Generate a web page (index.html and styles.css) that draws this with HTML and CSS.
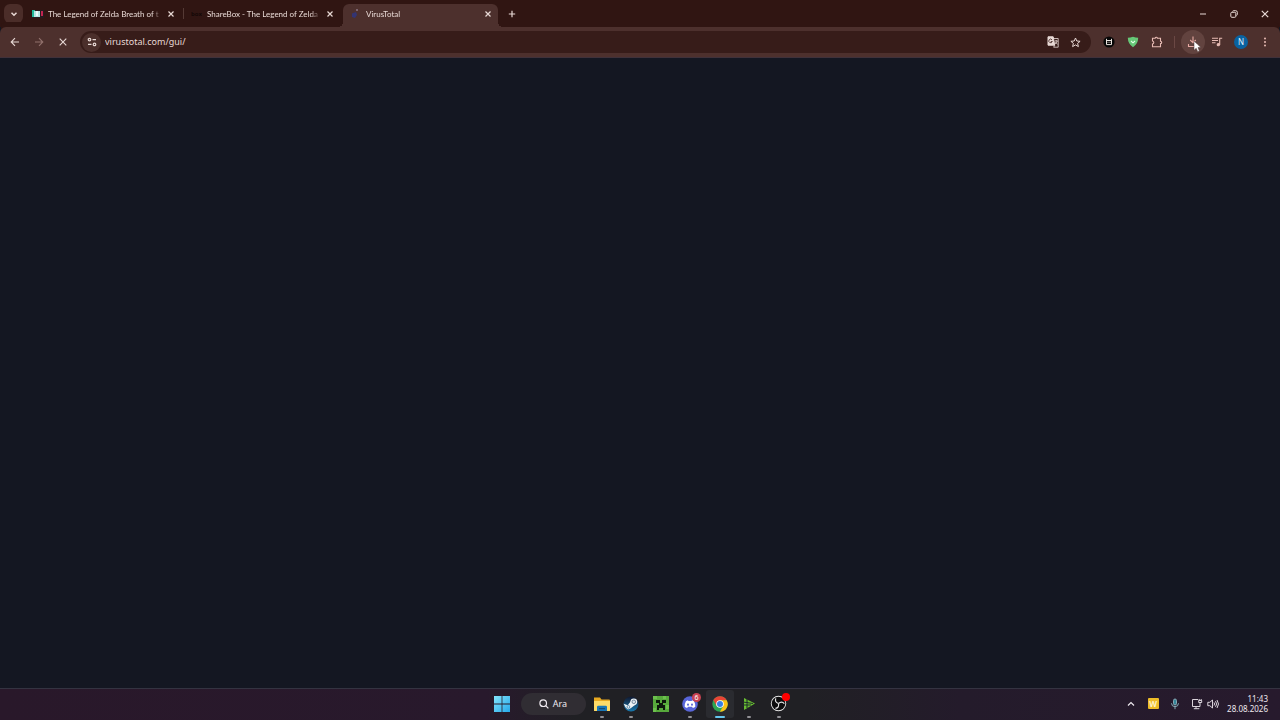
FILE: index.html
```html
<!DOCTYPE html>
<html lang="tr">
<head>
	<meta charset="UTF-8">
	<title>VirusTotal</title>
	<meta name="viewport" content="width=device-width,initial-scale=1">
	<link rel="stylesheet" href="styles.css">
</head>
<body>
	<!-- Tab strip -->
	<header class="tabstrip">
		<button class="tab-search" aria-label="Search tabs">
			<svg width="8" height="8" viewBox="0 0 8 8"><path d="M1.5 2.7 4 5.2 6.5 2.7" fill="none" stroke="currentColor" stroke-width="1.5"/></svg>
		</button>
		<div class="tab">
			<svg class="favicon" width="12" height="12" viewBox="0 0 12 12"><path d="M0 2h12v8H0z" fill="#251b20"/><path d="M0 2h3v7H0z" fill="#20b99a"/><path d="M2 3h6v6H2z" fill="#b5e6e4"/><path d="M4 3h2v5H4z" fill="#e9fbfa"/><path d="M9 3h2v5H9z" fill="#c22450"/></svg>
			<button class="tab-title">The Legend of Zelda Breath of t</button>
			<button class="tab-close" aria-label="Close tab"><svg width="8" height="8" viewBox="0 0 8 8"><path d="m1.5 1.5 5 5m0-5-5 5" stroke="currentColor" stroke-width="1.2"/></svg></button>
		</div>
		<div class="tab">
			<span class="favicon box-logo">box</span>
			<button class="tab-title">ShareBox - The Legend of Zelda</button>
			<button class="tab-close" aria-label="Close tab"><svg width="8" height="8" viewBox="0 0 8 8"><path d="m1.5 1.5 5 5m0-5-5 5" stroke="currentColor" stroke-width="1.2"/></svg></button>
		</div>
		<div class="tab active">
			<svg class="favicon" width="12" height="12" viewBox="0 0 12 12"><path d="M2 5.5 6 4l1 3-2 3-3-1z" fill="#333472"/><circle cx="7" cy="2" r=".8" fill="#b6a6c5"/></svg>
			<button class="tab-title">VirusTotal</button>
			<button class="tab-close" aria-label="Close tab"><svg width="8" height="8" viewBox="0 0 8 8"><path d="m1.5 1.5 5 5m0-5-5 5" stroke="currentColor" stroke-width="1.2"/></svg></button>
		</div>
		<button class="new-tab" aria-label="New tab"><svg width="8" height="8" viewBox="0 0 8 8"><path d="M4 .8v6.4M.8 4h6.4" stroke="currentColor" stroke-width="1.2"/></svg></button>
		<div class="window-buttons">
			<button aria-label="Minimize"><svg width="8" height="8" viewBox="0 0 8 8"><path d="M1 4h6" stroke="currentColor"/></svg></button>
			<button aria-label="Restore"><svg width="8" height="8" viewBox="0 0 8 8" fill="none" stroke="currentColor"><rect x=".8" y="2.3" width="5" height="5" rx="1"/><path d="M2.5 1.5q.2-.8 1.2-.8h2q1.6 0 1.6 1.6v2q0 1-.8 1.2"/></svg></button>
			<button aria-label="Close"><svg width="8" height="8" viewBox="0 0 8 8"><path d="m.8.8 6.4 6.4m0-6.4L.8 7.2" stroke="currentColor" stroke-width="1.2"/></svg></button>
		</div>
	</header>

	<!-- Toolbar -->
	<nav class="toolbar">
		<button class="tool" aria-label="Back"><svg width="10" height="10" viewBox="0 0 10 10" fill="none" stroke="currentColor" stroke-width="1.1"><path d="M9 5H1.5M5 1.2 1.2 5 5 8.8"/></svg></button>
		<button class="tool" aria-label="Forward" disabled><svg width="10" height="10" viewBox="0 0 10 10" fill="none" stroke="currentColor" stroke-width="1.1"><path d="M1 5h7.5M5 1.2 8.8 5 5 8.8"/></svg></button>
		<button class="tool" aria-label="Stop"><svg width="10" height="10" viewBox="0 0 10 10" fill="none" stroke="currentColor" stroke-width="1.1"><path d="m1.7 1.7 6.6 6.6m0-6.6L1.7 8.3"/></svg></button>
		<div class="omnibox">
			<button class="site-info" aria-label="Site information"><svg width="10" height="10" viewBox="0 0 10 10" fill="none" stroke="currentColor" stroke-width="1.2"><circle cx="2.5" cy="2.6" r="1.3"/><path d="M5.5 2.6H9M1 7.4h3.5"/><circle cx="7.5" cy="7.4" r="1.3"/></svg></button>
			<input class="address" type="text" aria-label="Address" value="virustotal.com/gui/">
			<button class="page-action" aria-label="Translate"><svg width="12" height="12" viewBox="0 0 12 12" fill="none" stroke="currentColor"><path d="M1 .8h5.2l1.5 8.4H1z" fill="currentColor"/><path d="M5 3.8A1.8 1.8 0 1 0 5.3 5.5H3.8" stroke="#371c19" stroke-width=".8"/><path d="M7 2.5h4.2v8.7H6.6l1.2-2M7.8 5h3M9.2 4v1M10.2 5q-.5 2-2.2 3M8.3 6l2.2 2.4" stroke-width=".8"/></svg></button>
			<button class="page-action" aria-label="Bookmark"><svg width="11" height="11" viewBox="0 0 11 11" fill="none" stroke="currentColor"><path d="m5.5 1 1.3 3 3.3.3-2.5 2.1.8 3.2-2.9-1.7-2.9 1.7.8-3.2L.9 4.3 4.2 4z"/></svg></button>
		</div>
		<div class="tools">
			<button class="tool" aria-label="Extension"><svg width="12" height="12" viewBox="0 0 12 12"><circle cx="6" cy="6" r="5.6" fill="#080707"/><path d="M3.5 2.8v5.8h5V2.8M3.5 4.5h5" fill="none" stroke="#e8e2dd"/><path d="M5 5.8v1m2-1v1" stroke="#e8e2dd" stroke-width=".9"/></svg></button>
			<button class="tool" aria-label="Ad blocker"><svg width="12" height="12" viewBox="0 0 12 12"><path d="M6 .8q2.6 1 5.2 1-.1 6.2-5.2 9.4Q.9 8 .8 1.8q2.6 0 5.2-1z" fill="#66c777"/><path d="m4 5 2 1.8L8 5" fill="none" stroke="#e2ffe5" stroke-width="1.1"/></svg></button>
			<button class="tool" aria-label="Extensions"><svg width="12" height="12" viewBox="0 0 12 12" fill="none" stroke="currentColor" stroke-width="1.1"><path d="M1.5 2.2h2.7q.2-1 1.1-1t1.1 1h3.1v3q1.2.2 1.2 1.2t-1.2 1.2v3.2h-8V8q1.3-.3 1.3-1.5T1.5 5z"/></svg></button>
		</div>
		<div class="tools downloads">
			<button class="tool download" aria-label="Downloads">
				<svg width="12" height="12" viewBox="0 0 12 12" fill="none" stroke="#e8aaa3" stroke-width="1.1"><path d="M6 .5v6M3.2 4 6 6.8 8.8 4M1.5 8v2.5h9V8"/></svg>
				<svg class="pointer" width="9" height="13" viewBox="0 0 9 13"><path d="M1 1v9.3l2.2-2 1.5 3.4 1.7-.8L5 7.6h3z" fill="#fff" stroke="#493330" stroke-width=".5"/></svg>
			</button>
			<button class="tool" aria-label="Media controls"><svg width="12" height="12" viewBox="0 0 12 12" fill="none" stroke="#e8bbb4" stroke-width="1.1"><path d="M1 2.2h6M1 4.5h6M1 6.8h3.5M8.7 9V2.2h2.5"/><circle cx="7.3" cy="8.7" r="1.1" fill="#e8bbb4"/></svg></button>
			<button class="tool" aria-label="Profile"><span class="avatar">N</span></button>
			<button class="tool" aria-label="Menu"><svg width="10" height="10" viewBox="0 0 10 10" fill="#e8bbb4"><circle cx="5" cy="1.5" r="1"/><circle cx="5" cy="5" r="1"/><circle cx="5" cy="8.5" r="1"/></svg></button>
		</div>
	</nav>

	<!-- Page still loading -->
	<main class="page"></main>

	<!-- Taskbar -->
	<footer class="taskbar">
		<div class="launcher">
			<button class="app" aria-label="Start"><svg width="16" height="16" viewBox="0 0 16 16"><defs><linearGradient id="win" x2="1" y2="1"><stop stop-color="#84e4fc"/><stop offset="1" stop-color="#25a8ea"/></linearGradient></defs><path d="M0 0h7.6v7.6H0zM8.4 0H16v7.6H8.4zM0 8.4h7.6V16H0zM8.4 8.4H16V16H8.4z" fill="url(#win)"/></svg></button>
			<button class="search"><svg width="10" height="10" viewBox="0 0 10 10" fill="none" stroke="currentColor" stroke-width="1.2"><circle cx="4.2" cy="4.2" r="3.3"/><path d="m6.6 6.6 2.8 2.8"/></svg>Ara</button>
			<div class="apps">
				<button class="app open" aria-label="File Explorer"><svg width="18" height="18" viewBox="0 0 18 18"><path d="M1 2.5h6l1.5 2H16q1 0 1 1V16H1z" fill="#e8a920"/><path d="M1 6h16v9.3q0 .7-.7.7H1.7q-.7 0-.7-.7z" fill="#fddb68"/><path d="M4 16v-4q0-1.3 1.3-1.3h7.4q1.3 0 1.3 1.3v4z" fill="#1976b6"/><path d="M6 13h6v1.2H6z" fill="#124b78"/></svg></button>
				<button class="app open" aria-label="Steam"><svg width="16" height="16" viewBox="0 0 16 16"><defs><linearGradient id="steam" x2="0" y2="1"><stop stop-color="#10182f"/><stop offset="1" stop-color="#1978ad"/></linearGradient></defs><circle cx="8" cy="8" r="7.5" fill="url(#steam)"/><path d="m.6 7.8 4.2 1.5 3-4 4.5 3.5-4.6 3.4-2.7 1.2-2.4-2z" fill="#eef3f6"/><circle cx="10.8" cy="5.8" r="3.4" fill="#eef3f6"/><circle cx="10.8" cy="5.8" r="1.8" fill="#dce5ec" stroke="#49647e" stroke-width=".7"/><circle cx="5.4" cy="10.9" r="1.4" fill="none" stroke="#3b6e93" stroke-width=".7"/></svg></button>
				<button class="app" aria-label="Minecraft"><svg width="16" height="16" viewBox="0 0 16 16"><path d="M0 0h16v16H0z" fill="#57a93c"/><path d="M0 0h4v3H0zM10 0h3v3h-3zM13 9h3v4h-3zM0 12h3v4H0z" fill="#6cc04d"/><path d="M3 4h4v3H3zm6 0h4v3H9zM6 7h4v2h2v5h-2v-2H6v2H4V9h2z" fill="#0c180c"/></svg></button>
				<button class="app open" aria-label="Discord"><svg width="16" height="16" viewBox="0 0 16 16"><circle cx="8" cy="8" r="7.8" fill="#5865d8"/><path d="m5.9 4.3.5.8h3.2l.5-.8 2 .9q1.5 2.8 1.2 5.5-1 .9-2.5 1.2l-.7-1.2H5.9l-.7 1.2q-1.5-.3-2.5-1.2-.3-2.7 1.2-5.5z" fill="#fff"/><ellipse cx="6" cy="8.6" rx="1" ry="1.2" fill="#5865d8"/><ellipse cx="10" cy="8.6" rx="1" ry="1.2" fill="#5865d8"/></svg><span class="badge">6</span></button>
				<button class="app open current" aria-label="Chrome"><svg width="16" height="16" viewBox="0 0 16 16"><circle cx="8" cy="8" r="7.7" fill="#2da653"/><path d="M1.3 4.1A7.7 7.7 0 0 1 14.7 4.2H8L4.7 10z" fill="#e94435"/><path d="M8 4.2h6.7A7.7 7.7 0 0 1 7.9 15.7L11.3 10z" fill="#fbc116"/><circle cx="8" cy="8" r="3.8" fill="#fff"/><circle cx="8" cy="8" r="3" fill="#367fe5"/></svg></button>
				<button class="app open" aria-label="Media player"><svg width="14" height="16" viewBox="0 0 14 16"><path d="m2 2 11 5.5L2 14z" fill="#69bd32"/><path d="m1 6 10 1.5M1 9h8M5 3v9" stroke="#20302a" stroke-width="1.1"/></svg></button>
				<button class="app open" aria-label="OBS Studio"><svg width="17" height="17" viewBox="0 0 17 17"><circle cx="8.5" cy="8.5" r="7.7" fill="#e4e4e4"/><circle cx="8.5" cy="8.5" r="6.8" fill="#0c0c0d"/><g fill="none" stroke="#e4e4e4" stroke-width="1.2"><path id="blade" d="M8.5 8.5Q4.4 7.2 5.8 3.4"/><use href="#blade" transform="rotate(120 8.5 8.5)"/><use href="#blade" transform="rotate(240 8.5 8.5)"/></g></svg><span class="badge recording"></span></button>
			</div>
		</div>
		<div class="tray">
			<button aria-label="Show hidden icons"><svg width="8" height="8" viewBox="0 0 8 8"><path d="M1 5.5 4 2.5l3 3" fill="none" stroke="currentColor" stroke-width="1.2"/></svg></button>
			<button aria-label="W"><span class="w-icon">W</span></button>
			<button aria-label="Microphone"><svg width="10" height="12" viewBox="0 0 10 12" fill="none" stroke="#86a9b5"><rect x="3.5" y="1" width="3" height="6" rx="1.5" fill="#36869a"/><path d="M1.5 5.3Q1.7 8.7 5 8.7t3.5-3.4M5 8.7v2.5"/></svg></button>
			<div class="status">
				<button aria-label="Network"><svg width="12" height="12" viewBox="0 0 12 12" fill="none" stroke="currentColor" stroke-width=".9"><path d="M7 1.5H1.5v7H9V6M5 8.5v2M2.8 10.7h5.5M9 6V4.7M7.7 2.5h3v2h-3zM8.2 1v1.5M10.2 1v1.5"/></svg></button>
				<button aria-label="Volume"><svg width="12" height="12" viewBox="0 0 12 12" fill="none" stroke="currentColor" stroke-width=".9"><path d="M.8 4.3h2L5.5 2v8L2.8 7.7h-2zM7 4.5q1.2 1.5 0 3M8.5 3.2q2.2 2.8 0 5.6M10 2q3 4 0 8"/></svg></button>
			</div>
			<button class="clock"><time>11:43</time><time>28.08.2026</time></button>
		</div>
	</footer>
</body>
</html>
```
FILE: styles.css
```css
* {
	box-sizing: border-box;
}
html, body {
	height: 100%;
}
body {
	display: flex;
	flex-direction: column;
	margin: 0;
	background: #141722;
	color: #e8d9d5;
	font: 9px/12px "Noto Sans", "Open Sans", sans-serif;
}
button, input {
	margin: 0;
	padding: 0;
	border: 0;
	background: none;
	color: inherit;
	font: inherit;
}
button {
	display: flex;
	align-items: center;
	justify-content: center;
	flex: none;
}
svg {
	display: block;
	flex: none;
}

/* Tab strip */
.tabstrip {
	display: flex;
	align-items: center;
	height: 27px;
	padding-left: 4px;
	background: #301512;
}
.tab-search {
	width: 19px;
	height: 19px;
	margin-right: 2px;
	border-radius: 6px;
	background: #4b2d29;
}
.tab {
	position: relative;
	display: flex;
	align-items: center;
	align-self: flex-end;
	flex: 0 1 159px;
	min-width: 0;
	height: 23px;
	padding: 0 9px 4px 7px;
}
.tab:first-of-type {
	background: linear-gradient(#553a35, #553a35) right 4px / 1px 11px no-repeat;
}
.favicon {
	flex: none;
	width: 12px;
	margin-right: 4px;
}
.box-logo {
	color: #140807;
	font-size: 6px;
	font-weight: bold;
}
.tab-title {
	display: block;
	flex: 1;
	min-width: 0;
	overflow: hidden;
	font-family: Lato, "Noto Sans", sans-serif;
	font-size: 8px;
	text-align: left;
	white-space: nowrap;
	-webkit-mask-image: linear-gradient(to right, #000 92%, transparent);
	mask-image: linear-gradient(to right, #000 92%, transparent);
}
.tab-close {
	margin-left: 6px;
}
.tab.active {
	flex-basis: 155px;
	padding-right: 6px;
	border-radius: 6px 6px 0 0;
	background: #4d302d;
}
/* flared feet of the selected tab */
.tab.active::before,
.tab.active::after {
	content: "";
	position: absolute;
	bottom: 0;
	width: 5px;
	height: 5px;
}
.tab.active::before {
	right: 100%;
	background: radial-gradient(circle at 0 0, transparent 5px, #4d302d 5px);
}
.tab.active::after {
	left: 100%;
	background: radial-gradient(circle at 100% 0, transparent 5px, #4d302d 5px);
}
.new-tab {
	width: 20px;
	height: 20px;
	margin-left: 4px;
}
.window-buttons {
	display: flex;
	margin-left: auto;
}
.window-buttons button {
	width: 31px;
	height: 27px;
}

/* Toolbar */
.toolbar {
	display: flex;
	align-items: center;
	height: 31px;
	padding: 0 3px;
	border-bottom: 1px solid #40313a;
	border-radius: 6px 6px 0 0;
	background: #4d302d;
	box-shadow: 0 -6px 0 -1px #301512;
}
.tool {
	width: 24px;
	height: 24px;
}
.tool:disabled {
	color: #92716d;
}
.omnibox {
	display: flex;
	align-items: center;
	flex: 1;
	height: 22px;
	margin: 0 6px 0 5px;
	padding: 0 5px 0 2px;
	border-radius: 11px;
	background: #371c19;
}
.site-info {
	width: 19px;
	height: 19px;
	margin-right: 4px;
	border-radius: 50%;
	background: #4b2f2b;
}
.address {
	flex: 1;
	min-width: 0;
	outline: 0;
}
.page-action {
	width: 22px;
	height: 22px;
}
.tools {
	display: flex;
	color: #e8bbb4;
}
.downloads {
	margin-left: 5px;
	padding-left: 7px;
	background: linear-gradient(#6b4844, #6b4844) 0 center / 1px 12px no-repeat;
}
.download {
	position: relative;
	border-radius: 50%;
	background: #62433f;
}
.pointer {
	position: absolute;
	left: 12px;
	top: 10px;
}
.avatar {
	width: 14px;
	border-radius: 50%;
	background: #0962a0;
	color: #e5f2fb;
	font-size: 8px;
	line-height: 14px;
}

.page {
	flex: 1;
}

/* Taskbar */
.taskbar {
	display: grid;
	grid-template-columns: 1fr auto 1fr;
	align-items: center;
	height: 32px;
	padding-bottom: 2px;
	border-top: 1px solid #343341;
	background: linear-gradient(to right, #29182a, #28192c 38%, #202024 45%, #202024 63%, #241b2b 75%, #271a2d);
	color: #eee9ef;
}
.launcher {
	display: flex;
	grid-column: 2;
}
.app {
	position: relative;
	width: 28px;
	height: 28px;
	border-radius: 3px;
}
.search {
	gap: 4px;
	align-self: center;
	width: 65px;
	height: 22px;
	margin: 0 2px 0 5px;
	border-radius: 11px;
	background: #302d33;
}
.apps {
	display: flex;
	justify-content: space-between;
	width: 205px;
}
.open::after {
	content: "";
	position: absolute;
	bottom: 0;
	left: 12px;
	width: 4px;
	height: 2px;
	border-radius: 1px;
	background: #929196;
}
.current {
	background: #2a2b30;
}
.current::after {
	left: 9px;
	width: 10px;
	background: #65c7ef;
}
.badge {
	position: absolute;
	top: 3px;
	right: 3px;
	width: 9px;
	height: 9px;
	border-radius: 50%;
	background: #c94352;
	color: #fff;
	font-size: 7px;
	line-height: 9px;
}
.recording {
	width: 8px;
	height: 8px;
	background: #f00;
}
.tray {
	display: flex;
	align-items: center;
	justify-self: end;
	padding-right: 12px;
}
.tray > button {
	width: 22px;
	height: 28px;
}
.w-icon {
	width: 11px;
	border-radius: 1px;
	background: #edbd28;
	color: #fff3c4;
	font-size: 8px;
	font-weight: bold;
	line-height: 11px;
}
.status {
	display: flex;
	gap: 4px;
	margin: 0 8px 0 5px;
}
.tray > .clock {
	flex-direction: column;
	align-items: flex-end;
	width: auto;
	font-size: 8px;
	line-height: 10px;
}
```
